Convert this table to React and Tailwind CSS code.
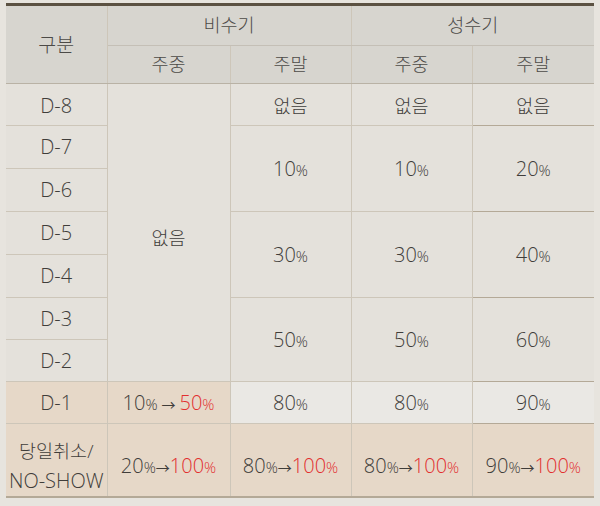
const font = { fontFamily: '"Open Sans", "Noto Sans CJK KR", "Noto Sans", sans-serif' };

function Pct({ v, red }) {
  return (
    <span className={`text-[20px] ${red ? "text-[#e22f2f]" : ""}`}>
      {v}
      <span className="text-[15px]">%</span>
    </span>
  );
}

function Change({ from, to, spaced }) {
  return (
    <span className="whitespace-nowrap">
      <Pct v={from} />
      {spaced ? <span className="mx-[4px] text-[14px] font-normal">→</span> : <span className="text-[14px] font-normal">→</span>}
      <Pct v={to} red />
    </span>
  );
}

function L({ children }) {
  return <span className="text-[20px]">{children}</span>;
}

const hb = "border-b border-[#b4a997]";
const vb = "border-r border-[#cdc6b9]";
const last = "border-b-2 border-b-[#b4a997]";

export default function App() {
  return (
    <div className="w-[600px] h-[506px] bg-[#e7e4de] pt-[3px] pl-[6px]" style={font}>
      <table className="table-fixed border-collapse w-[588px] text-[#3f3d3a] text-[18.5px] font-light leading-none text-center border-t-[3px] border-t-[#5b5142]">
        <colgroup>
          <col className="w-[101px]" />
          <col className="w-[123px]" />
          <col className="w-[121px]" />
          <col className="w-[121px]" />
          <col className="w-[122px]" />
        </colgroup>
        <thead className="bg-[#d7d5cf] text-[#4c4a47]">
          <tr className="h-[41px]">
            <th rowSpan={2} className={`font-light text-[19.5px] ${vb} border-b border-b-[#b9b2a5]`}>구분</th>
            <th colSpan={2} className={`font-light ${vb} border-b border-b-[#c4bfb6]`}>비수기</th>
            <th colSpan={2} className="font-light border-b border-b-[#c4bfb6]">성수기</th>
          </tr>
          <tr className="h-[38px]">
            <th className={`font-light ${vb} border-b border-b-[#b9b2a5]`}>주중</th>
            <th className={`font-light ${vb} border-b border-b-[#b9b2a5]`}>주말</th>
            <th className={`font-light ${vb} border-b border-b-[#b9b2a5]`}>주중</th>
            <th className="font-light border-b border-b-[#b9b2a5]">주말</th>
          </tr>
        </thead>
        <tbody className="bg-[#e4e1db]">
          <tr className="h-[42px]">
            <td className={`${hb} ${vb} pt-[3px]`}><L>D-8</L></td>
            <td rowSpan={7} className={`${hb} ${vb} pt-[12px]`}>없음</td>
            <td className={`${hb} ${vb} pt-[3px]`}>없음</td>
            <td className={`${hb} ${vb} pt-[3px]`}>없음</td>
            <td className={`${hb} pt-[3px]`}>없음</td>
          </tr>
          <tr className="h-[43px]">
            <td className={`${hb} ${vb}`}><L>D-7</L></td>
            <td rowSpan={2} className={`${hb} ${vb}`}><Pct v="10" /></td>
            <td rowSpan={2} className={`${hb} ${vb}`}><Pct v="10" /></td>
            <td rowSpan={2} className={hb}><Pct v="20" /></td>
          </tr>
          <tr className="h-[43px]">
            <td className={`${hb} ${vb}`}><L>D-6</L></td>
          </tr>
          <tr className="h-[43px]">
            <td className={`${hb} ${vb}`}><L>D-5</L></td>
            <td rowSpan={2} className={`${hb} ${vb}`}><Pct v="30" /></td>
            <td rowSpan={2} className={`${hb} ${vb}`}><Pct v="30" /></td>
            <td rowSpan={2} className={hb}><Pct v="40" /></td>
          </tr>
          <tr className="h-[43px]">
            <td className={`${hb} ${vb}`}><L>D-4</L></td>
          </tr>
          <tr className="h-[42px]">
            <td className={`${hb} ${vb}`}><L>D-3</L></td>
            <td rowSpan={2} className={`${hb} ${vb}`}><Pct v="50" /></td>
            <td rowSpan={2} className={`${hb} ${vb}`}><Pct v="50" /></td>
            <td rowSpan={2} className={hb}><Pct v="60" /></td>
          </tr>
          <tr className="h-[42px]">
            <td className={`${hb} ${vb}`}><L>D-2</L></td>
          </tr>
          <tr className="h-[42px]">
            <td className={`${hb} ${vb} bg-[#e6d8c8]`}><L>D-1</L></td>
            <td className={`${hb} ${vb} bg-[#e6d8c8]`}><Change from="10" to="50" spaced /></td>
            <td className={`${hb} ${vb} bg-[#eae8e4]`}><Pct v="80" /></td>
            <td className={`${hb} ${vb} bg-[#eae8e4]`}><Pct v="80" /></td>
            <td className={`${hb} bg-[#eae8e4]`}><Pct v="90" /></td>
          </tr>
          <tr className="h-[72px] bg-[#e6d8c8]">
            <td className={`${last} ${vb} pt-[12px] pb-0 leading-[30px]`}>
              당일취소/
              <br />
              <L>NO-SHOW</L>
            </td>
            <td className={`${last} ${vb} pt-[12px]`}><Change from="20" to="100" /></td>
            <td className={`${last} ${vb} pt-[12px]`}><Change from="80" to="100" /></td>
            <td className={`${last} ${vb} pt-[12px]`}><Change from="80" to="100" /></td>
            <td className={`${last} pt-[12px]`}><Change from="90" to="100" /></td>
          </tr>
        </tbody>
      </table>
    </div>
  );
}
